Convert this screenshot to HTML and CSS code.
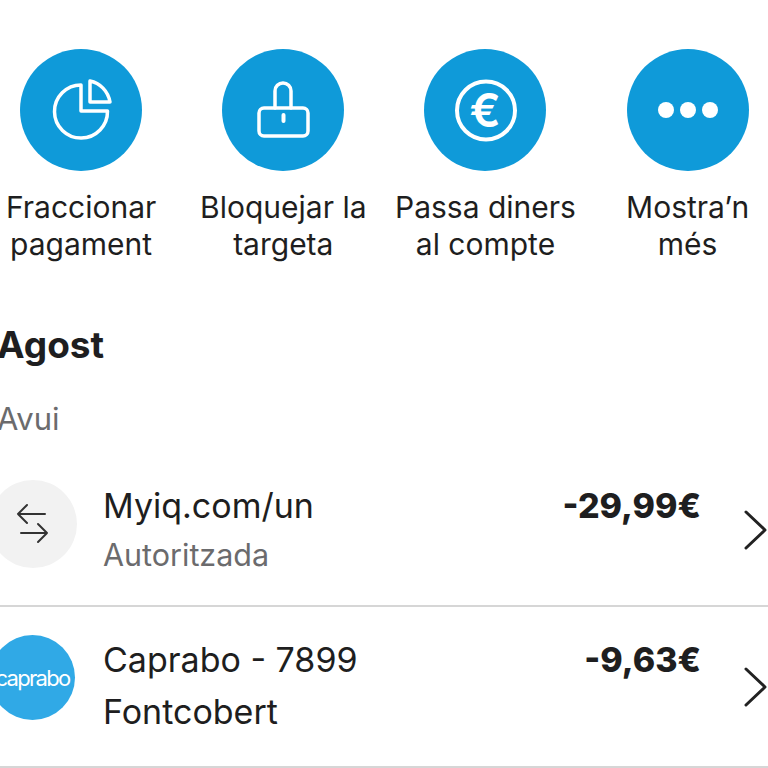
FILE: index.html
```html
<!DOCTYPE html>
<html lang="ca">
<head>
  <meta charset="UTF-8" />
  <meta name="viewport" content="width=device-width, initial-scale=1.0" />
  <title>Targeta</title>
  <link rel="stylesheet" href="styles.css">
</head>
<body>
  <section class="actions">
    <a href="#" class="action">
      <span class="action-icon">
        <svg width="64" height="64" viewBox="0 0 64 64" fill="none" stroke="#fff" stroke-width="3.5" stroke-linejoin="round">
          <path d="M32 7A26.5 26.5 0 1 0 58.5 33H32Z"/>
          <path d="M41 3V24H61C59 13 51 5 41 3Z"/>
        </svg>
      </span>
      <span class="action-label">Fraccionar<br>pagament</span>
    </a>
    <a href="#" class="action">
      <span class="action-icon">
        <svg width="64" height="64" viewBox="0 0 64 64" fill="none" stroke="#fff" stroke-width="3.5" stroke-linecap="round" stroke-linejoin="round">
          <rect x="8" y="30" width="49" height="28" rx="5"/>
          <path d="M24 30V13a8 8 0 0 1 16 0V30"/>
          <path d="M32.5 37v6" stroke-width="4"/>
        </svg>
      </span>
      <span class="action-label">Bloquejar la<br>targeta</span>
    </a>
    <a href="#" class="action">
      <span class="action-icon">
        <svg width="64" height="64" viewBox="0 0 64 64" fill="none" stroke="#fff">
          <circle cx="33" cy="32.5" r="29" stroke-width="4"/>
          <text class="coin-glyph" x="32" y="49" text-anchor="middle">€</text>
        </svg>
      </span>
      <span class="action-label">Passa diners<br>al compte</span>
    </a>
    <a href="#" class="action">
      <span class="action-icon">
        <svg width="60" height="20" viewBox="0 0 60 20" fill="#fff">
          <circle cx="8" cy="10" r="8"/>
          <circle cx="30" cy="10" r="8"/>
          <circle cx="52" cy="10" r="8"/>
        </svg>
      </span>
      <span class="action-label">Mostra’n<br>més</span>
    </a>
  </section>

  <section class="movements">
    <h2 class="month">Agost</h2>
    <p class="day">Avui</p>

    <div class="row row-first">
      <div class="avatar-slot">
        <span class="avatar avatar-grey">
          <svg width="34" height="44" viewBox="0 0 34 44" fill="none" stroke="#333" stroke-width="2" stroke-linecap="round" stroke-linejoin="round">
            <path d="M29 12H2M11 3L2 12L11 21"/>
            <path d="M5 31H31M22 22L31 31L22 40"/>
          </svg>
        </span>
      </div>
      <div class="row-text">
        <div class="row-title">Myiq.com/un</div>
        <div class="row-sub">Autoritzada</div>
      </div>
      <div class="row-amount">-29,99€</div>
      <svg class="chevron" width="24" height="40" viewBox="0 0 24 40" fill="none" stroke="#222" stroke-width="3" stroke-linecap="round" stroke-linejoin="round">
        <path d="M2 2L21 20L2 38"/>
      </svg>
    </div>

    <div class="row">
      <div class="avatar-slot">
        <span class="avatar avatar-caprabo">caprabo</span>
      </div>
      <div class="row-text">
        <div class="row-title">Caprabo - 7899</div>
        <div class="row-title">Fontcobert</div>
      </div>
      <div class="row-amount">-9,63€</div>
      <svg class="chevron" width="24" height="40" viewBox="0 0 24 40" fill="none" stroke="#222" stroke-width="3" stroke-linecap="round" stroke-linejoin="round">
        <path d="M2 2L21 20L2 38"/>
      </svg>
    </div>
  </section>
</body>
</html>
```

FILE: styles.css
```css
:root {
  --blue: #0f9ad9;
  --text-dark: #1e1e20;
  --text-grey: #6b6b6d;
  --line: #d6d6d6;
}
* { box-sizing: border-box; }
html, body { height: 100%; }
body {
  margin: 0;
  overflow: hidden;
  background: #fff;
  color: var(--text-dark);
  font-family: 'Inter', 'Liberation Sans', sans-serif;
}
.actions {
  display: grid;
  grid-template-columns: repeat(4, 202.2px);
  margin-left: -20px;
  padding-top: 49px;
}
.action {
  display: flex;
  flex-direction: column;
  align-items: center;
  color: var(--text-dark);
  text-decoration: none;
}
.action-icon {
  width: 122px;
  height: 122px;
  border-radius: 50%;
  background: var(--blue);
  display: flex;
  align-items: center;
  justify-content: center;
}
.coin-glyph {
  fill: #fff;
  stroke: none;
  font-size: 46px;
  font-weight: 600;
}
.action-label {
  margin-top: 18px;
  font-size: 30px;
  line-height: 37px;
  text-align: center;
  white-space: nowrap;
}
.movements { margin-top: 60px; }
.month {
  margin: 0 0 0 -3px;
  font-size: 37px;
  line-height: 44px;
  font-weight: 700;
}
.day {
  margin: 34px 0 0 -3px;
  font-size: 31px;
  line-height: 36px;
  color: var(--text-grey);
}
.row {
  height: 161px;
  display: flex;
  align-items: flex-start;
  border-bottom: 2px solid var(--line);
}
.row-first {
  height: 153px;
  margin-top: 17px;
}
.avatar-slot {
  flex: none;
  width: 103px;
  padding-top: 28px;
}
.row-first .avatar-slot { padding-top: 26px; }
.avatar {
  border-radius: 50%;
  display: flex;
  align-items: center;
  justify-content: center;
}
.avatar-grey {
  width: 88px;
  height: 88px;
  margin-left: -11px;
  background: #f2f2f2;
}
.avatar-caprabo {
  width: 85px;
  height: 85px;
  margin-left: -10px;
  background: #30a9e6;
  color: #fff;
  font-size: 22px;
  letter-spacing: -1.7px;
}
.row-text {
  flex: 1;
  padding-top: 27px;
}
.row-first .row-text { padding-top: 26px; }
.row-title {
  font-size: 34px;
  line-height: 52px;
}
.row-sub {
  font-size: 30.5px;
  line-height: 46px;
  color: var(--text-grey);
}
.row-amount {
  margin-top: 27px;
  font-size: 34px;
  line-height: 52px;
  font-weight: 800;
}
.row-first .row-amount { margin-top: 26px; }
.chevron {
  flex: none;
  align-self: center;
  margin-left: 43px;
}
```
